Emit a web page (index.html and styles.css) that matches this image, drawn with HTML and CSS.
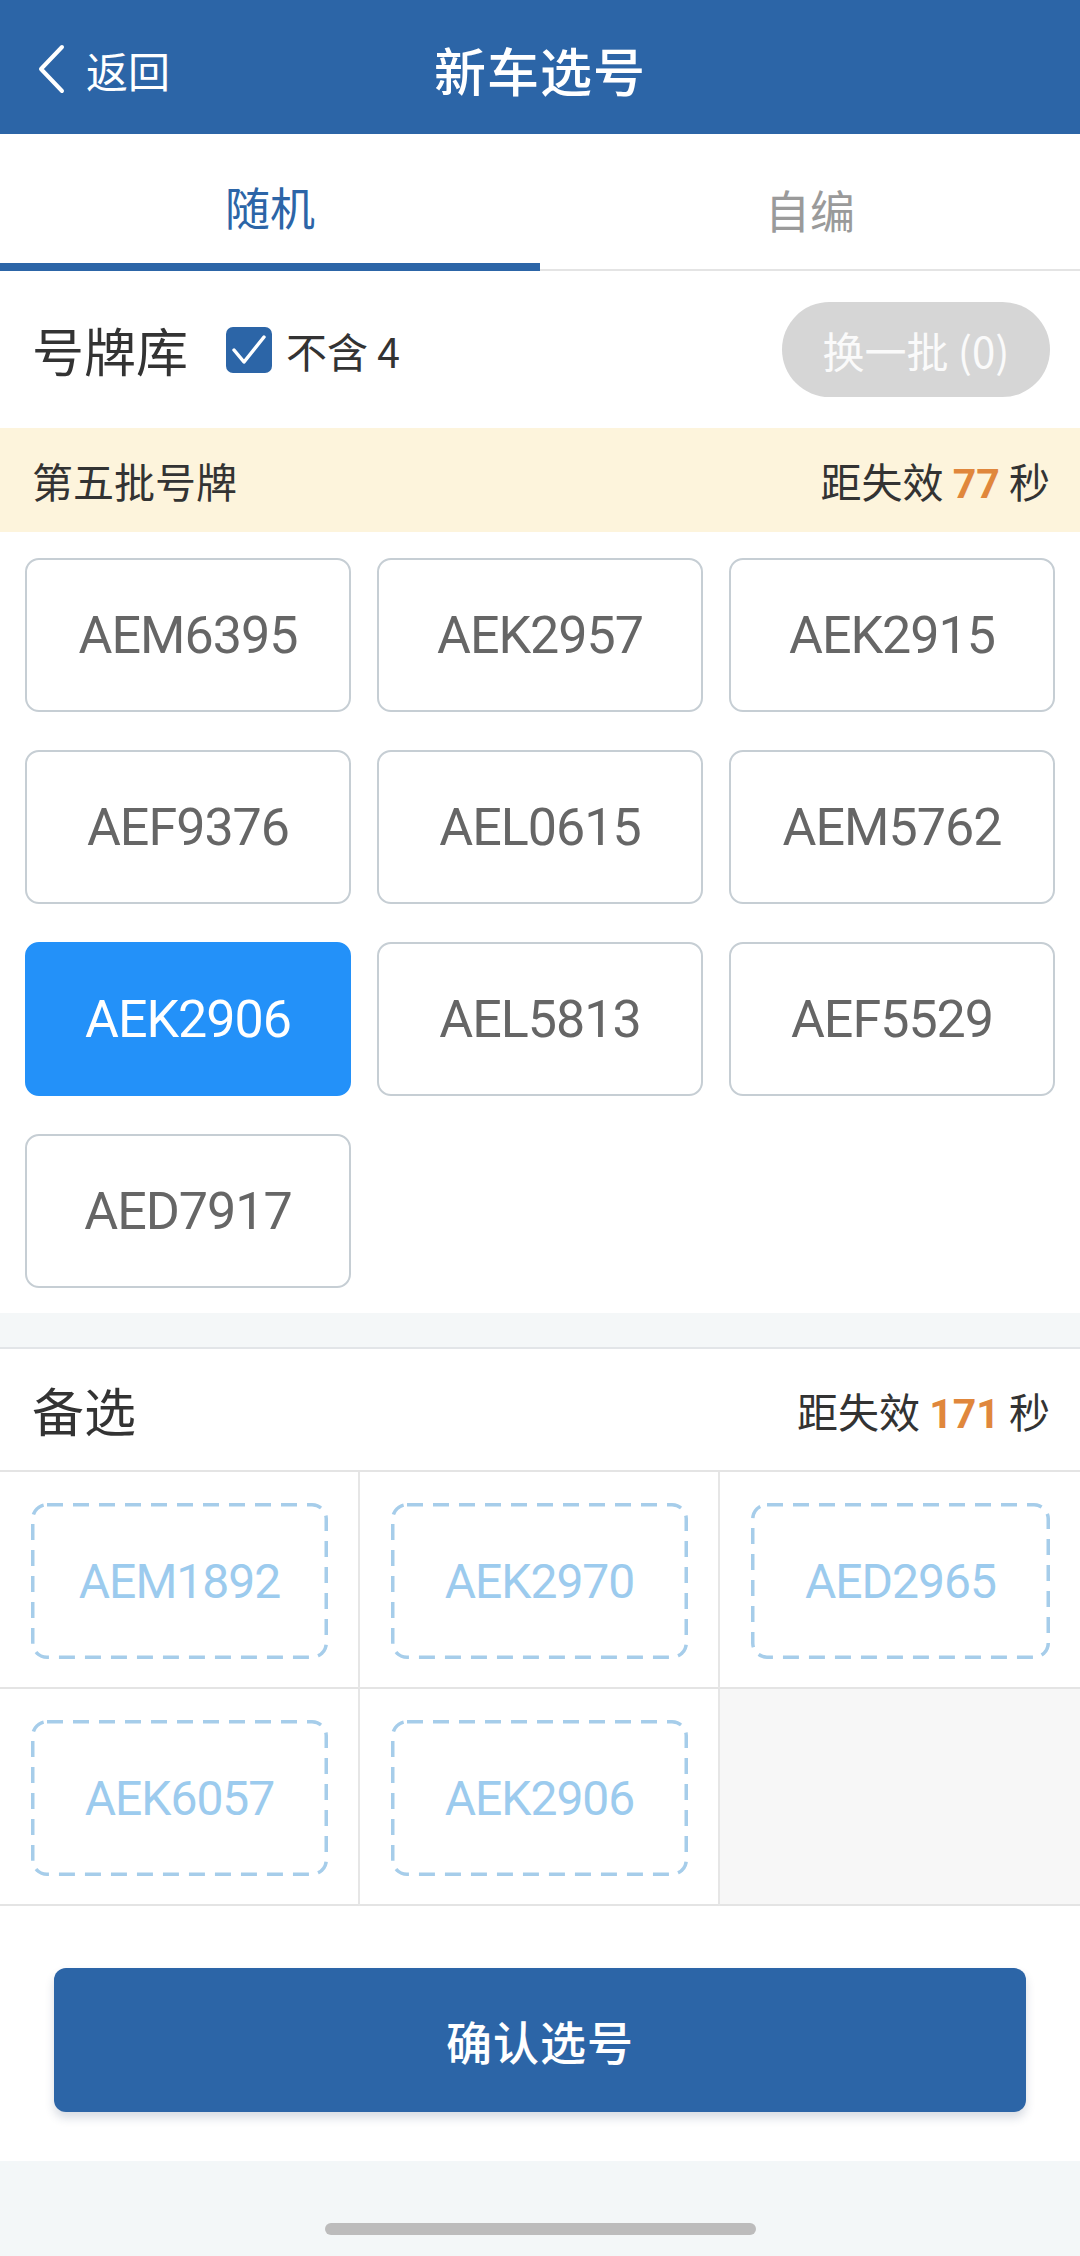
FILE: index.html
```html
<!DOCTYPE html>
<html lang="zh-CN">
<head>
  <meta charset="UTF-8">
  <title>新车选号</title>
  <link rel="stylesheet" href="styles.css">
</head>
<body>

  <!-- Top bar -->
  <div class="topbar">
    <a class="back" href="#">
      <svg width="30" height="50" viewBox="0 0 30 50">
        <polyline points="26,3 5,25 26,47" fill="none" stroke="#fff" stroke-width="4" stroke-linecap="round" stroke-linejoin="round"/>
      </svg>
      <span>返回</span>
    </a>
    <h1>新车选号</h1>
    <div></div>
  </div>

  <!-- Tabs -->
  <div class="tabs">
    <div class="tab active">随机</div>
    <div class="tab">自编</div>
  </div>

  <!-- Plate pool -->
  <div class="pool-head">
    <div class="pool-title">号牌库</div>
    <label class="check">
      <span class="check-box">
        <svg width="38" height="34" viewBox="0 0 38 34">
          <polyline points="4,17 14,29 34,4" fill="none" stroke="#fff" stroke-width="3.5" stroke-linecap="round" stroke-linejoin="round"/>
        </svg>
      </span>
      <span>不含 4</span>
    </label>
    <button class="swap-btn">换一批 (0)</button>
  </div>

  <div class="batch-bar">
    <span>第五批号牌</span>
    <span>距失效 <b>77</b> 秒</span>
  </div>

  <div class="plates">
    <div class="plate">AEM6395</div>
    <div class="plate">AEK2957</div>
    <div class="plate">AEK2915</div>
    <div class="plate">AEF9376</div>
    <div class="plate">AEL0615</div>
    <div class="plate">AEM5762</div>
    <div class="plate selected">AEK2906</div>
    <div class="plate">AEL5813</div>
    <div class="plate">AEF5529</div>
    <div class="plate">AED7917</div>
  </div>

  <div class="section-gap"></div>

  <!-- Alternates -->
  <div class="alt-head">
    <div class="alt-title">备选</div>
    <span class="countdown">距失效 <b>171</b> 秒</span>
  </div>

  <div class="alt-grid">
    <div class="alt-cell"><div class="alt-plate">AEM1892</div></div>
    <div class="alt-cell"><div class="alt-plate">AEK2970</div></div>
    <div class="alt-cell"><div class="alt-plate">AED2965</div></div>
    <div class="alt-cell"><div class="alt-plate">AEK6057</div></div>
    <div class="alt-cell"><div class="alt-plate">AEK2906</div></div>
    <div class="alt-cell empty"></div>
  </div>

  <div class="confirm-wrap">
    <button class="confirm-btn">确认选号</button>
  </div>

  <div class="home-area">
    <div class="home-bar"></div>
  </div>

</body>
</html>
```

FILE: styles.css
```css
body {
  margin: 0;
  width: 1080px;
  font-family: "Noto Sans CJK SC", "Noto Sans", sans-serif;
  background-color: #fff;
  color: #333;
}

/* Top bar */
.topbar {
  height: 134px;
  background-color: #2c65a7;
  display: grid;
  grid-template-columns: 1fr auto 1fr;
  align-items: center;
  color: white;
}

.back {
  display: flex;
  align-items: center;
  gap: 20px;
  padding-left: 36px;
  color: white;
  text-decoration: none;
  font-size: 42px;
  padding-top: 4px;
}

.topbar h1 {
  margin: 0;
  font-size: 52px;
  font-weight: 500;
  letter-spacing: 1px;
  padding-top: 4px;
}

/* Tabs */
.tabs {
  display: flex;
}

.tab {
  flex: 1;
  height: 137px;
  box-sizing: border-box;
  display: flex;
  align-items: center;
  justify-content: center;
  padding-top: 16px;
  font-size: 45px;
  color: #9a9a9a;
  border-bottom: 2px solid #e4e4e4;
}

.tab.active {
  color: #2c65a7;
  border-bottom: 8px solid #2c65a7;
}

/* Pool header */
.pool-head {
  height: 157px;
  display: flex;
  align-items: center;
  padding: 0 30px 0 32px;
}

.pool-title {
  font-size: 52px;
  margin-right: 38px;
}

.check {
  display: flex;
  align-items: center;
  gap: 14px;
  font-size: 41px;
  color: #333;
}

.check-box {
  width: 46px;
  height: 46px;
  border-radius: 7px;
  background-color: #2c65a7;
  display: flex;
  align-items: center;
  justify-content: center;
}

.swap-btn {
  margin-left: auto;
  width: 268px;
  height: 95px;
  border: none;
  border-radius: 48px;
  background-color: #d6d6d6;
  color: #fafafa;
  font-family: inherit;
  font-size: 42px;
}

/* Batch bar */
.batch-bar {
  height: 104px;
  background-color: #fdf4dc;
  display: flex;
  align-items: center;
  justify-content: space-between;
  padding: 0 30px 0 32px;
  font-size: 41px;
  color: #333;
}

.batch-bar b, .countdown b {
  color: #e0873c;
  font-family: "Roboto", sans-serif;
  font-weight: bold;
}

/* Plates */
.plates {
  display: grid;
  grid-template-columns: repeat(3, 1fr);
  gap: 38px 26px;
  padding: 26px 25px 25px;
}

.plate {
  height: 154px;
  box-sizing: border-box;
  border: 2px solid #c6ced4;
  border-radius: 14px;
  display: flex;
  align-items: center;
  justify-content: center;
  font-family: "Roboto", sans-serif;
  font-size: 52px;
  letter-spacing: -1px;
  color: #666;
}

.plate.selected {
  background-color: #2391f9;
  border-color: #2391f9;
  color: white;
}

.section-gap {
  height: 34px;
  background-color: #f4f7f8;
  border-bottom: 2px solid #e2e5e8;
}

/* Alternates */
.alt-head {
  height: 121px;
  display: flex;
  align-items: center;
  justify-content: space-between;
  padding: 0 30px 0 32px;
}

.alt-title {
  font-size: 52px;
}

.countdown {
  font-size: 41px;
}

.alt-grid {
  display: grid;
  grid-template-columns: repeat(3, 1fr);
  border-top: 2px solid #e4e4e4;
}

.alt-cell {
  height: 217px;
  box-sizing: border-box;
  border-right: 2px solid #e6e6e6;
  border-bottom: 2px solid #e4e4e4;
  padding: 31px 30px 28px 31px;
}

.alt-cell:nth-child(3n) {
  border-right: none;
}

.alt-cell.empty {
  background-color: #f7f7f7;
}

.alt-plate {
  height: 100%;
  box-sizing: border-box;
  border-radius: 16px;
  background-image: url("data:image/svg+xml,%3Csvg xmlns='http://www.w3.org/2000/svg'%3E%3Crect x='0' y='0' width='100%25' height='100%25' rx='16' fill='none' stroke='%23a6cdea' stroke-width='7' stroke-dasharray='16 10'/%3E%3C/svg%3E");
  display: flex;
  align-items: center;
  justify-content: center;
  font-family: "Roboto", sans-serif;
  font-size: 48px;
  letter-spacing: -1px;
  color: #9ccbee;
}

/* Confirm */
.confirm-wrap {
  padding: 62px 54px 49px;
}

.confirm-btn {
  width: 100%;
  height: 144px;
  border: none;
  border-radius: 12px;
  background-color: #2c65a7;
  color: white;
  font-family: inherit;
  font-size: 46px;
  font-weight: 500;
  letter-spacing: 1px;
  box-shadow: 0 6px 10px rgba(40, 60, 100, 0.18);
}

.home-area {
  height: 95px;
  background-color: #f3f7f8;
  display: flex;
  justify-content: center;
  padding-top: 62px;
  box-sizing: border-box;
}

.home-bar {
  width: 431px;
  height: 12px;
  border-radius: 6px;
  background-color: #bcbcbc;
}
```
